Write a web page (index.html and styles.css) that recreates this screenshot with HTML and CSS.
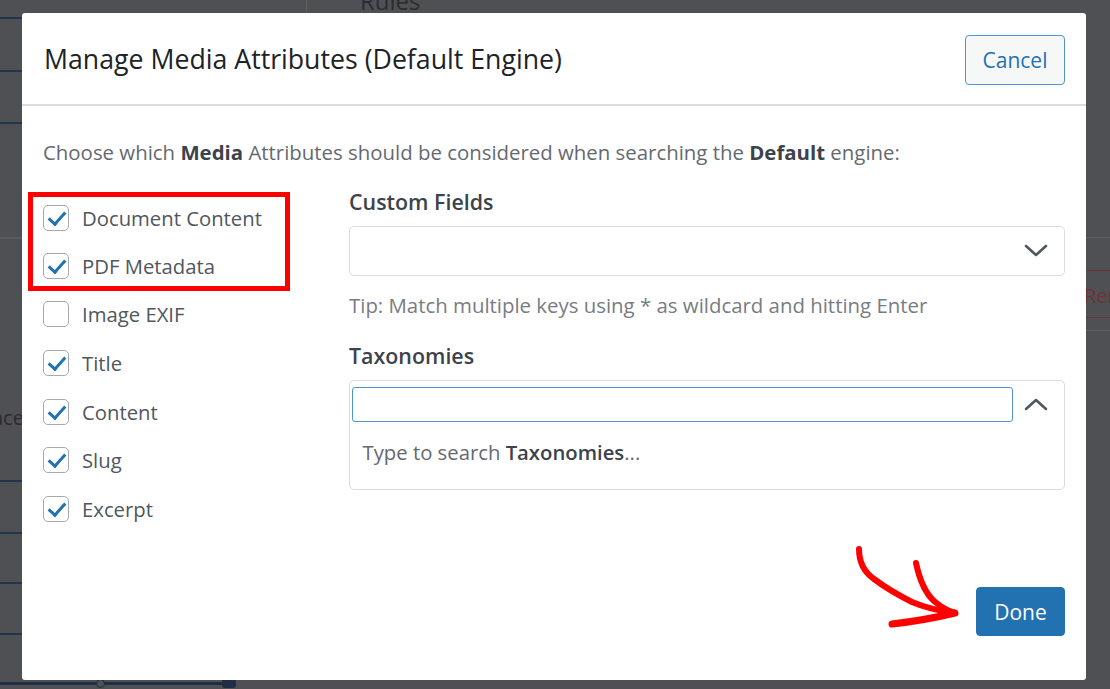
FILE: index.html
```html
<!DOCTYPE html>
<html>
<head>
<meta charset="utf-8">
<link rel="stylesheet" href="styles.css">
</head>
<body>
<div class="backdrop">
  <div class="bg-rules">Rules</div>
  <div class="bg-vline"></div>
  <div class="bg-line l1"></div>
  <div class="bg-line l2"></div>
  <div class="bg-line l3"></div>
  <div class="bg-line l4"></div>
  <div class="bg-line l5"></div>
  <div class="bg-line l6"></div>
  <div class="bg-line l7"></div>
  <div class="bg-line l8"></div>
  <div class="bg-rline r1"></div>
  <div class="bg-rline r2"></div>
  <div class="bg-ren">Ren</div>
  <div class="bg-ace">ace</div>
  <div class="bg-slider"><span class="knob1"></span><span class="knob2"></span></div>
</div>

<div class="modal">
  <div class="modal-header">
    <h1 class="modal-title">Manage Media Attributes (Default Engine)</h1>
    <button class="btn-cancel">Cancel</button>
  </div>
  <div class="modal-body">
    <p class="intro">Choose which <b>Media</b> Attributes should be considered when searching the <b>Default</b> engine:</p>
    <div class="columns">
      <div class="attr-list">
        <div class="highlight">
          <label class="attr"><span class="cb checked"></span>Document Content</label>
          <label class="attr"><span class="cb checked"></span>PDF Metadata</label>
        </div>
        <label class="attr"><span class="cb"></span>Image EXIF</label>
        <label class="attr"><span class="cb checked"></span>Title</label>
        <label class="attr"><span class="cb checked"></span>Content</label>
        <label class="attr"><span class="cb checked"></span>Slug</label>
        <label class="attr"><span class="cb checked"></span>Excerpt</label>
      </div>
      <div class="fields">
        <h2 class="field-label">Custom Fields</h2>
        <div class="select">
          <svg class="chev" viewBox="0 0 24 14" width="24" height="14"><path d="M2 2 L12 11 L22 2" fill="none" stroke="#50575e" stroke-width="2.6" stroke-linecap="round" stroke-linejoin="round"/></svg>
        </div>
        <p class="tip">Tip: Match multiple keys using * as wildcard and hitting Enter</p>
        <h2 class="field-label tax">Taxonomies</h2>
        <div class="select open">
          <div class="select-top">
            <div class="search-input"></div>
            <svg class="chev" viewBox="0 0 24 14" width="24" height="14"><path d="M2 12 L12 3 L22 12" fill="none" stroke="#50575e" stroke-width="2.6" stroke-linecap="round" stroke-linejoin="round"/></svg>
          </div>
          <div class="hint">Type to search <b>Taxonomies</b>...</div>
        </div>
      </div>
    </div>
  </div>
  <div class="modal-footer">
    <svg class="arrow" viewBox="0 0 112 92" width="112" height="92">
      <path d="M9 9 C9 22 14 32 24 39 C36 48 50 56 62 62 C76 68 90 71 105 73" fill="none" stroke="#ff0000" stroke-width="6" stroke-linecap="round"/>
      <path d="M66 23 C69 37 74 52 84 61 C91 67 98 71 105 73" fill="none" stroke="#ff0000" stroke-width="6" stroke-linecap="round"/>
      <path d="M42 84 C60 82 80 79 105 73" fill="none" stroke="#ff0000" stroke-width="7" stroke-linecap="round"/>
    </svg>
    <button class="btn-done">Done</button>
  </div>
</div>
</body>
</html>
```

FILE: styles.css
```css
html, body {
  margin: 0;
  padding: 0;
}
body {
  width: 1110px;
  height: 689px;
  background: #4f5054;
  font-family: "Open Sans", "Noto Sans", sans-serif;
  overflow: hidden;
  position: relative;
}

.backdrop {
  position: absolute;
  inset: 0;
}
.bg-rules {
  position: absolute;
  left: 360px;
  top: -16px;
  font-size: 24px;
  color: #2b2c30;
}
.bg-vline {
  position: absolute;
  left: 306px;
  top: 0;
  width: 1px;
  height: 12px;
  background: #5e5f63;
}
.bg-line {
  position: absolute;
  left: 0;
  width: 22px;
  height: 2px;
  background: #23344d;
}
.l1 { top: 17px; }
.l2 { top: 70px; }
.l3 { top: 122px; }
.l4 { top: 237px; background: #5a5b5f; }
.l5 { top: 480px; }
.l6 { top: 532px; }
.l7 { top: 582px; }
.l8 { top: 633px; }
.bg-rline {
  position: absolute;
  left: 1086px;
  width: 24px;
  height: 1px;
  background: #5e5f63;
}
.r1 { top: 237px; }
.r2 { top: 330px; }
.bg-ren {
  position: absolute;
  left: 1084px;
  top: 270px;
  width: 40px;
  height: 46px;
  line-height: 50px;
  font-size: 20px;
  color: #6e3236;
  border-top: 1.5px solid #6e3236;
  border-bottom: 1.5px solid #6e3236;
}
.bg-ace {
  position: absolute;
  left: 0;
  top: 404px;
  font-size: 20px;
  color: #2b2c30;
  margin-left: -8px;
}
.bg-slider {
  position: absolute;
  left: 0;
  top: 682px;
  width: 236px;
  height: 3px;
  background: #1e2e45;
}
.knob1 {
  position: absolute;
  left: 96px;
  top: -3px;
  width: 7px;
  height: 7px;
  border-radius: 50%;
  border: 1px solid #1e2e45;
  background: #4f5054;
}
.knob2 {
  position: absolute;
  left: 222px;
  top: -4px;
  width: 14px;
  height: 10px;
  border-radius: 3px;
  background: #1e2e45;
}

.modal {
  position: absolute;
  left: 22px;
  top: 13px;
  width: 1064px;
  height: 667px;
  background: #ffffff;
  border-radius: 3px;
  display: flex;
  flex-direction: column;
  box-sizing: border-box;
}

.modal-header {
  height: 93px;
  box-sizing: border-box;
  border-bottom: 2px solid #dcdcde;
  display: flex;
  align-items: center;
  justify-content: space-between;
  padding: 0 21px 0 22px;
}
.modal-title {
  margin: 0;
  font-size: 26.7px;
  font-weight: 400;
  color: #1d2327;
  letter-spacing: 0;
}
.btn-cancel {
  width: 100px;
  height: 50px;
  border: 1.5px solid #4f94d4;
  background: #f6f7f7;
  color: #2271b1;
  border-radius: 4px;
  font-family: inherit;
  font-size: 21px;
  padding: 0;
  margin-top: 3px;
}

.modal-body {
  flex: 1;
  padding: 0 21px;
}
.intro {
  margin: 32px 0 0 0;
  line-height: 28px;
  font-size: 20.4px;
  color: #646970;
}
.intro b {
  color: #3c434a;
  font-weight: 700;
}

.columns {
  display: flex;
  margin-top: 26px;
}
.attr-list {
  width: 306px;
  flex: none;
  display: flex;
  flex-direction: column;
}
.highlight {
  margin-left: -15px;
  width: 262px;
  box-sizing: border-box;
  border: 5px solid #ff0000;
  padding: 1px 0 0 10px;
  margin-bottom: -1px;
  display: flex;
  flex-direction: column;
  gap: 8px;
}
.attr {
  height: 48.7px;
  display: flex;
  align-items: center;
  font-size: 20.3px;
  color: #50575e;
  flex: none;
}
.highlight .attr {
  height: 40px;
}
.cb {
  width: 24px;
  height: 24px;
  border: 1.5px solid #a7aaad;
  border-radius: 5px;
  margin-right: 13px;
  flex: none;
  position: relative;
  background: #fff;
}
.cb.checked::after {
  content: "";
  position: absolute;
  left: 8px;
  top: 2px;
  width: 7px;
  height: 14px;
  border-right: 3.5px solid #2271b1;
  border-bottom: 3.5px solid #2271b1;
  transform: rotate(42deg);
}

.fields {
  flex: 1;
}
.field-label {
  margin: -4px 0 10px 0;
  line-height: 28px;
  font-size: 21.4px;
  font-weight: 600;
  color: #3c434a;
}
.field-label.tax {
  margin-top: 23px;
}
.select {
  height: 50px;
  box-sizing: border-box;
  border: 1.5px solid #dcdcde;
  border-radius: 5px;
  display: flex;
  align-items: center;
  justify-content: flex-end;
  padding-right: 16px;
}
.select.open {
  height: 110px;
  flex-direction: column;
  align-items: stretch;
  justify-content: flex-start;
  padding: 5.5px 16px 0 1.5px;
}
.select-top {
  display: flex;
  align-items: center;
  gap: 11px;
}
.search-input {
  flex: 1;
  height: 35px;
  box-sizing: border-box;
  border: 1.5px solid #4f94d4;
  border-radius: 3px;
}
.hint {
  margin: 16px 0 0 11px;
  line-height: 28px;
  font-size: 20.3px;
  color: #646970;
}
.hint b {
  color: #3c434a;
  font-weight: 600;
}
.tip {
  margin: 15px 0 0 0;
  line-height: 28px;
  font-size: 20.4px;
  color: #787c82;
}

.modal-footer {
  height: 93px;
  display: flex;
  align-items: flex-start;
  justify-content: flex-end;
  padding: 0 21px 0 0;
  position: relative;
}
.arrow {
  margin-top: -47px;
  margin-right: 14px;
}
.btn-done {
  width: 89px;
  height: 49px;
  margin-top: 0;
  background: #2271b1;
  border: 1px solid #2271b1;
  color: #ffffff;
  border-radius: 4px;
  font-family: inherit;
  font-size: 21px;
  padding: 0;
}
```
